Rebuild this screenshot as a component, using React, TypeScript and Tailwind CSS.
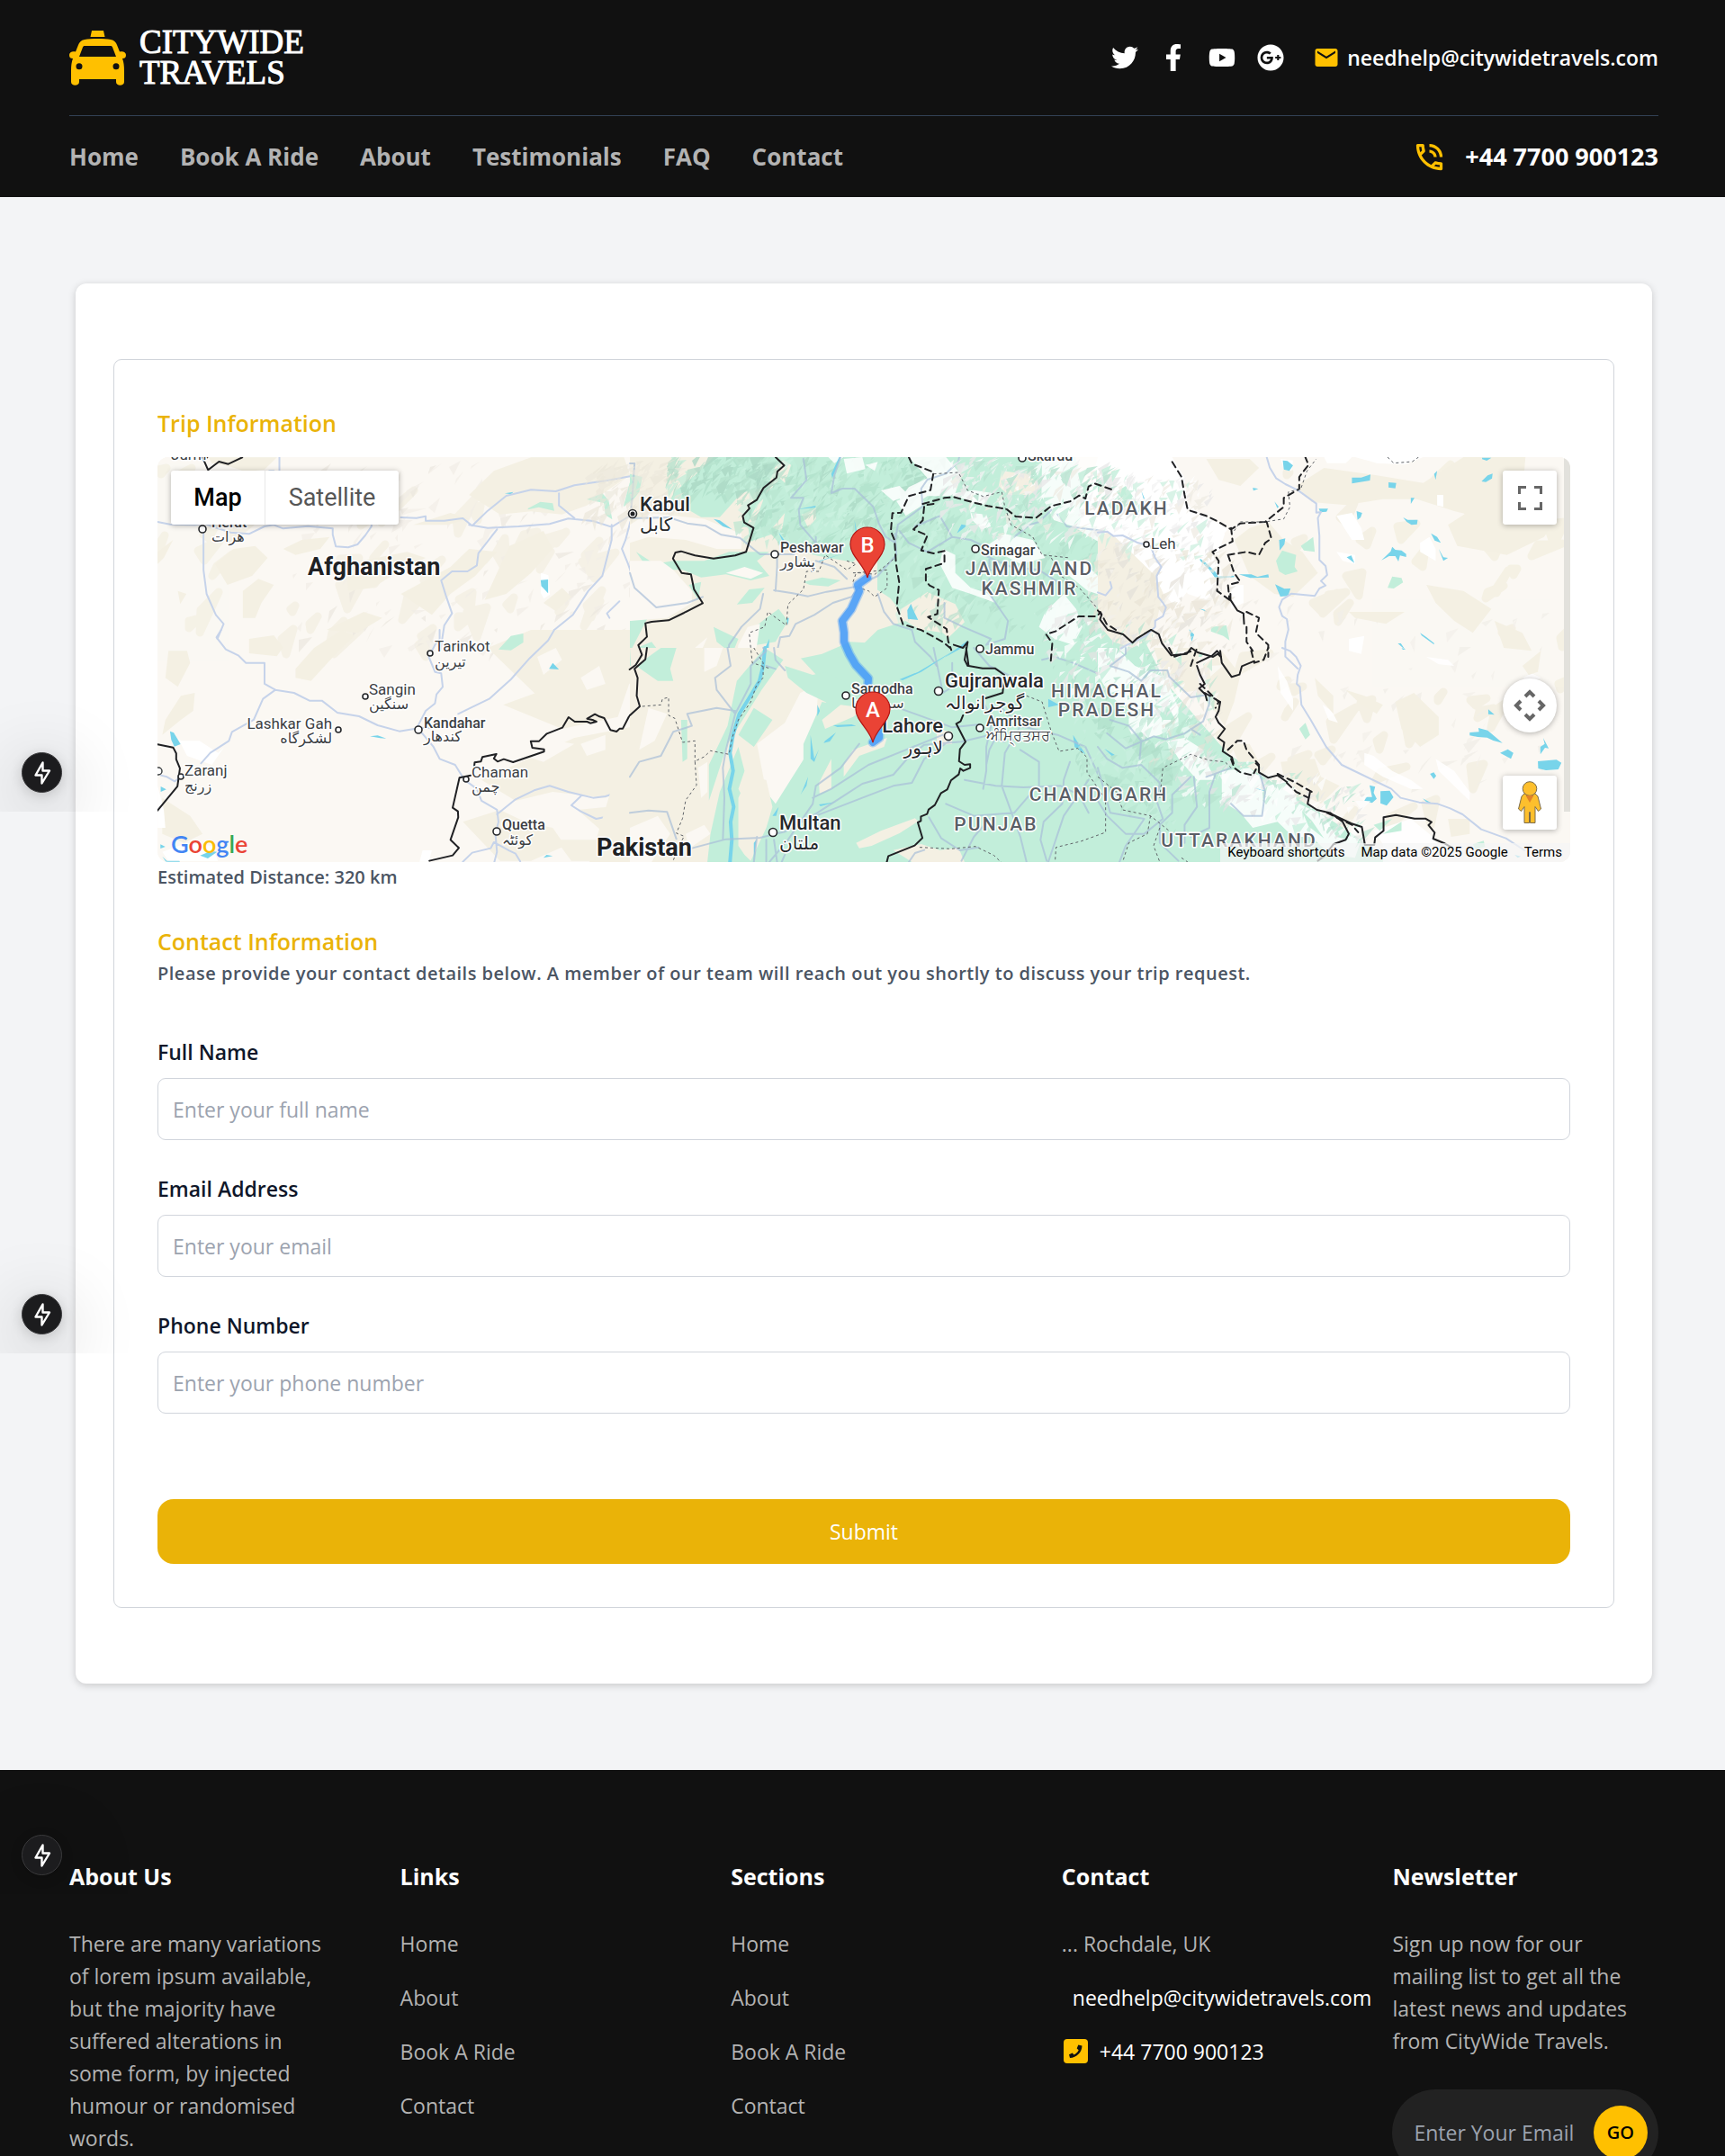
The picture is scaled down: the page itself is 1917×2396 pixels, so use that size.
import React from 'react';
import { FaTwitter, FaFacebookF, FaYoutube, FaGooglePlus } from 'react-icons/fa';
import { MdEmail, MdOutlinePhoneInTalk } from 'react-icons/md';

const CREAM = '#fbf8f3';
const BEIGE = '#f4f0e3';
const GREEN = '#c2eeda';
const RIVER = '#c6d3ea';
const WATER = '#78d4ea';
const INK = '#202124';

/* ---------- terrain ---------- */

function seeded(seed: number) {
  let s = seed;
  return () => {
    s = (s * 16807) % 2147483647;
    return s / 2147483647;
  };
}

/* Small shaded facets scattered over an area to suggest relief; soft ones get rounded, blobby edges. */
function Relief({ seed, n, x, y, w, h, size, colors, slope = 0, opacity = 0.6, soft = 0 }: {
  seed: number; n: number; x: number; y: number; w: number; h: number; size: number; colors: string[]; slope?: number; opacity?: number; soft?: number;
}) {
  const r = seeded(seed);
  const out: Record<string, string> = {};
  for (let i = 0; i < n; i++) {
    const cx = x + r() * w;
    const cy = y + r() * h + ((cx - x) / w) * slope;
    const a = size * (0.4 + r());
    const p = [cx, cy, cx + a * (0.5 + r()), cy - a * r(), cx + a * (r() - 0.4), cy + a * (0.3 + r() * 0.8)].map((v) => v.toFixed(0));
    const c = colors[Math.floor(r() * colors.length)];
    out[c] = (out[c] || '') + `M${p[0]} ${p[1]}L${p[2]} ${p[3]}L${p[4]} ${p[5]}Z`;
  }
  return (
    <g opacity={opacity}>
      {Object.entries(out).map(([c, d]) => <path key={c} d={d} fill={c} stroke={c} strokeWidth={soft} strokeLinejoin="round" />)}
    </g>
  );
}

function Tile({ x, y, children }: { x: number; y: number; children: React.ReactNode }) {
  return <g transform={`translate(${x} ${y}) scale(0.3444 0.3333)`}>{children}</g>;
}

const line = { fill: 'none', strokeLinejoin: 'round' as const, strokeLinecap: 'round' as const, vectorEffect: 'non-scaling-stroke' as const };
const River = ({ d }: { d: string }) => <path d={d} stroke={RIVER} strokeWidth={2} {...line} />;
const Road = ({ d }: { d: string }) => <path d={d} stroke="#a9bfd9" strokeWidth={2} opacity={0.7} {...line} />;
const Border = ({ d }: { d: string }) => <path d={d} stroke={INK} strokeWidth={2} {...line} />;
const Dashed = ({ d }: { d: string }) => <path d={d} stroke={INK} strokeWidth={2} strokeDasharray="7 5" {...line} />;
const Dotted = ({ d }: { d: string }) => <path d={d} stroke="#5f6368" strokeWidth={1} strokeDasharray="3 3" {...line} strokeLinecap="butt" />;

const ROUTE = 'M789 134L778 142L780 149L771 169L761 182L763 195L763 205L769 219L776 231L790 246L789 262L796 280L802 300L802 312L795 317';

function Terrain() {
  return (
    <>
      <rect width="1570" height="450" fill={CREAM} />
      <Relief seed={11} n={46} x={0} y={10} w={480} h={200} size={20} colors={[BEIGE]} opacity={0.8} soft={9} />
      <Relief seed={12} n={170} x={150} y={10} w={400} h={210} size={11} colors={['#f2eee7', '#f3efe8', '#ece8e0']} opacity={0.7} />
      <Relief seed={13} n={46} x={1180} y={10} w={380} h={420} size={18} colors={[BEIGE]} opacity={0.9} soft={9} slope={10} />
      <Relief seed={14} n={70} x={1160} y={160} w={380} h={220} size={10} colors={['#f2efe9', '#f4f1eb']} opacity={0.8} />
      {/* western uplands */}
      <Tile x={-5} y={-68}>
        <g fill={BEIGE}>
          <path d="M180 205h220l-40 40-60 8-60-20-50-8Z M1020 330l80-80 120-45h300l20 60-60 40-80 60-80 30-100-10-100 10Z" />
          <path d="M200 560l60-50 70-10 40 40-50 60-80 30Z M290 650l50-40 50 20-40 60-20 50h-40Z M420 510l60-30 90-10-30 40-80 20Z M430 350l90-50 110 10-30 50-90 30Z M620 560l200-40 60 20-80 40-90 60-80 10Z M800 660l160-90 60-60 90 10-70 80-80 60-60 70Z M1150 500l110-50 30 60-70 80-80 70-70 20Z M15 520l50-40-30 60-20 20Z M80 650l28 10-20 34Z M1260 690l60-50 30 30-50 48Z M560 780l120-60 60 20-80 50Z M840 430l120-40 60 20-70 20Z" />
        </g>
        <g fill={GREEN}>
          <path d="M1210 375l40-22 40 5 5 25-50-12-35 8Z M1400 345l50-20 20 22 12 65-22-15-5-40Z M1568 250l-30 40-20 80 25-20 25-45Z M1555 740l13-8v50l-13-5Z M1155 806l35-12v16h-35Z" />
        </g>
        <path fill="#fff" d="M1252 590l24 8 5 64-20 14-10-20Z" />
        <path fill={WATER} d="M1251 614l24-2v46l-22-24Z M1135 325l28-5-8 8Z" />
        <River d="M15 420l40 8 80 2 30-5 25 10 60 20 60 5 50-25 30-5 30 12 80-8 80 8 0 20 10 40 40 3 30-10 25-30 20-30v-30M800 405l50 2 30-6 0 15 60 0 60-8 30 25 50-50 60-50 80-20 80 5 60-20 100-15 80-15 30-60-20-10M1020 430l60 10 100-5 100-8 60-18 80 8 60 20 60-38 120-14M1310 325l0 40 50 42M1480 430l0 50-30 120-45 50-50 80-60 50-40 50M1110 445l-30 40-30 40-5 40-30 20-50 0-35 30 15 50 20 60-25 40-12 80M163 460v120l10 80 30 70 25 30-20 50M408 205v45M375 250l15 0M1540 420l-15 60-12 30 20 50 20 60 15 20M1505 685l-40 40 8 15" />
        <Border d="M160 205l18 42 35-28 30 8 45-22M175 205l-12-10" />
      </Tile>
      <Tile x={-5} y={192}>
        <g fill={BEIGE}>
          <path d="M50 70l60 0 10 40-40 80-40-30Z M460 130l60-70 90-60 40 20-60 60-80 90-50-10Z M310 30l80-12 30 40-20 30-90-10Z M90 220l45-10-5 60-40 30-60 50 10-50Z M1080 60l140-60h340v150l-60 80-160 20-100-30-80-80Z M1130 250l160-60 250-20-40 120-180 40Z M1060 500l300-140 200-40v180l-100 60-170-20-120 30Z M30 560l90 60 40 60-60 30-70-30Z M1000 640l120-40 80 40 90 20 40 60-110 50h-100Z M1370 600l200-20v120l-100-10Z M1300 700l150 0 100 50v20h-200Z" />
        </g>
        <path fill={CREAM} d="M1240 90l60-30 20 40-60 50Z M1380 160l60-40 20 60-60 20Z M1200 420l100-50 60 10-100 60Z M1380 380l80-30 0 50-60 20Z" />
        <path fill="#fff" d="M15 520l20 80 5 60h-25Z M90 370l60 0 60 40 20-20-40 60-80-30-30-60Z M30 740l80-30 80 10 20 50h-160Z M870 735h30l-10 38h-30Z" />
        <path fill={GREEN} d="M1115 65l40-45 40-8v30l-40 26Z M1555 90l13 0v60l-8-20Z" />
        <g fill={WATER}><path d="M55 338l12 5 22 38-20 8-10-22Z M25 522l18 10-18 8Z M152 752l35-15 20 3-30 22Z M30 755l15 15h40l2 3h-45Z M700 355l25-3 28 10-20-1Z M1278 130l12-20 20 22Z M1260 760l10-10 20 4Z M24 715l16 8-16 6Z" /></g>
        <River d="M220 0l-15 25 30 40 40 20 25 25 60 0 0 70 35 20 60 10 50 26 40 0 50 40 70 12 60 30 70 20 70-12 40 2M395 200l-40 30-30 70-70 40-10 30-60 40-30 35M925 0l0 30-15 20-20 40 20 50 20 5 5 45-20 25-5 30-30 25-25 50M1295 0l-20 35-60 60-60 70-70 65-60 30-40 20M865 340l40 50 20 40 50 20 30 50 40 30 15 40 50 30 5 40-10 40 5 60-15 60M1110 615l60-50 60-30 50-15 60 20 80 20 40-5 60-20 40-60 8-50M1380 555l-30 30 30 20 50 25 40-8 95-15M1000 773l30-30 60-15 10-20 50 28 20 10 15 26M25 485l20 5 25 15 20-15" />
        <Border d="M15 382l50 10 10 20 0 20 12 30-8 60-64 80M1568 105l-15 22 10 25 3 105-30 32-20 40h-10l-10 10-20-5-20-40-15-5-15-8-25 15 20 5 10 5-20 5-10-5-40 0-20-15-20 35-50 20-25 25h-27l5 22 38 5v8l-100 35-30-10-20 8-12-10 8-15-45 10-5 15-20 3-2 20M1025 485l-36 8-22 100 17 12 1 20-25 75 27 27-20 25-75 18" />
      </Tile>

      {/* green Indus basin */}
      <path fill={BEIGE} d="M525 0H1045V212L1000 260H700L650 450H480L525 300Z" />
      <path fill={GREEN} d="M578 0H1020L1060 130L1120 250L1190 330L1330 420L1370 450H610L640 330L690 230L720 170L800 160L800 90L740 40L700 80L640 100L580 90L560 60L570 50Z" />
      <Tile x={525} y={-18}>
        <g fill={BEIGE}>
          <path d="M0 54h270l-60 60-60 50-20 30 100 60 60 0 70-80 70-20-60 90-20 90-30 60-60 10-120-10-20-60-80-40h-20Z" />
          <path d="M480 54l20 30-30 70-60 60-30 60 10 80 60 40 80 30 150 20 100 40 60 40 30 40 90-60 90 40 30 60-90 90 60 60h-520l-60-80-80-40-60-60v-80l30-60-40-60-40-20 0-60 120-10Z" />
        </g>
        <g fill={GREEN}>
          <path d="M480 54h420l-60 200-120 150-110-20-120-30-60-80 0-90 60-60Z" />
          <path d="M0 110l40 10-10 50-30 40Z M20 370l60 40 60-10 100 0 80-30 130 0-40 30 40 50-60 15-80-20-80 10-60-25-100 0-30-30Z M90 460l50 10-30 60-25-10Z M345 545l40-50 50-5-40 50Z M190 480l40-10-10 60Z M270 620l80 40-20 50-50-40Z M0 600l60-15-30 60-30 60Z M0 700l70-30 30 40 30 40h-130Z M380 640l60-50 40-30 30 40-40 70-60 10Z M560 470l60-15 60 10-40 20-60-5Z M480 740l140-30 90-40 180 10 60-50 60 10 60 60 0 60h-560Z M720 750l20-60 60-60 90-30 60 40-60 90Z" />
        </g>
        <g fill={BEIGE}><path d="M1200 100l80 10 50 40-40 30-70 0-30-30Z M555 245l45-20 0 35-25 30Z M500 240l-10 60-30-10Z M490 60l30 20-20 60-20-20Z" /></g>
        <g fill={CREAM}>
          <path d="M0 280l60-40 180 20 120 50 0 50-80 0-100-30-120-10-60 20Z M0 400l100 0 40 30 60 70 0 40-80 50-120 10Z M350 680l30-60 40-10-10 70-20 70h-50Z M210 690l40-35-15 35-30 30Z M310 440l60-20 60 20-40 20Z" />
        </g>
      </Tile>
      <Relief seed={21} n={420} x={640} y={0} w={230} h={95} size={11} colors={['#aedfc9', '#b8e6d0', '#a9d6c3', '#cdf3e2', '#bfead6']} opacity={0.65} />
      <Relief seed={20} n={160} x={565} y={0} w={110} h={48} size={12} colors={['#aedfc9', '#b5e2cd', GREEN, '#a9d6c3']} opacity={0.75} slope={-10} />
      <Relief seed={22} n={240} x={820} y={60} w={220} h={130} size={11} colors={['#b3e2cd', '#bce9d4', '#b0dcc9', '#cff3e3']} />
      <Tile x={525} y={-18}>
        <g fill="#fff" opacity="0.85">
          <path d="M690 60l60-6 10 40-60 15Z M640 54h50l-30 20Z M900 54h120l50 60-20 60 60-10 60 10-30 40-90-30-90 0-30 20-60-10 30-40 60-30Z M860 200l80-30 10 40-60 40Z M810 165l60-15 30 30-50 20Z M1100 240l50 5 15 40-30 10-30-30Z M1010 360l40 20 0 60 50 50 60 20 20 30-80-30-60-20-40-80Z M1330 54h238v300l-60-20-80-50-60-20-40-80Z M1150 350l60-40 90 20 40 60-80 20Z M1400 400l60 0 60 60 48 10v60l-90-30-60-50Z M1340 570l60-60 40 50 20 60-30 60-60-20-50-40Z M760 80l40-10-10 30Z" />
        </g>
        <g fill={WATER}>
          <path d="M540 228l60-12-2 6-56 6Z M1055 308l15-30 18 4Z M895 565l12-22 8 22 15 32-33-4Z M480 305l18 25-5 5Z M725 265l8 40h-5Z M610 400l80-25-80 28Z M436 690l14-30-6 90h-12l-4-28-66-6 60-1Z M505 590l8 0-3 25Z M980 750l25-20 85-65-10 20-70 40Z M270 260l20 5 40 30-30-10Z M650 110l25-56 6 0-20 50-8 20Z" />
        </g>
        <Road d="M0 75l15 0-5 80-8 100M5 258l120-3 60 20 60 8 50 30 60 10 65 55 80 0 30 0M0 440l15 50 70 65 100-15 50-20M600 320l0 20-50-60-5-50 15-40-40 0 50-60-10-70M680 54l-20 60-10 60 35-15 40 0 60 60 20 60 20 40 30 20 10-60 80-60-5-60 20-30 60-20 40-40 10-60M470 500l5-80 0-35M465 498l60 10 50 10 60-15 110-20M745 480l-30 40-60 20-60 40-60 30-20 40-30 5-30 140M800 510l20 60 30 40 60 20 10 40 50 50 20 30M430 510l-10 50-60 60-40 60-5 70M740 480l60-30 60-70-5-70M700 460l-40-40-60-20M920 285l80-35 40 70-80 50-60-30-30-40M1040 320l60 10 60 30 0 70 40 5M1380 245l30 40 158 20M1240 320l50-40 30-10 40-40M1015 540l0 50 60 30 90 40-15 20 60-20 10-60-60-90 0-50M1140 380l90 40 90 10 60 40 0 40" />
      </Tile>
      <Tile x={525} y={212}>
        <g fill={BEIGE}><path d="M0 0h520l90 100 40 60-60 80-60 80-60 90-80 90-40 60-20 154h-290Z" /></g>
        <g fill={CREAM}><path d="M410 320l90-70 50-100 60-30-10 120-20 100-110 180-30-40Z M60 200l60 20-40 90-50 30Z M240 0l60 0-20 60-40 20Z M0 600l90-40 40 60-60 94h-70Z M180 620l60-30 20 30-70 50Z M220 400l30-20 0 100-20 20Z" /></g>
        <g fill={GREEN}><path d="M20 60l80-60h50l-20 70 10 40-50 0Z M345 110l90-110 60 40-70 100-110 180-60 190 0-120 60-130Z M500 60l90 30 40-10 60 30 30 40-70 40-80-40-60-50Z M290 480l60-150 20 80-20 60 30 60-20 100 0 84h-110l10-94Z M165 240l20 0 0 130-15 10Z M400 200l60 40-60 90-50-40Z M560 320l60-140 50 10-20 100-90 130Z" /></g>
        <g fill={BEIGE}>
          <path d="M620 240l60-50 80 10-40 30-90 40Z M690 390l30-50 110-40-10 30-80 30-50 70Z M610 450l40-80 0 100-38 15Z M730 650l80-40 110-42 10 10-60 40-90 42-40 8Z M910 714l-60-40 90-20 60 20 60-8 20 48Z M350 660l0-160 30-70 60 10 20 90-20 70-50 110-20-20Z M990 270l50 10 0 40-50 5Z" />
        </g>
        <path d="M436 0l-6 60-12 50-35 60-30 50-20 70-10 60 10 60-12 60 14 60-10 50 4 60-6 74" stroke={WATER} strokeWidth={4} {...line} />
        <g fill={WATER}><path d="M655 258l60-3 15 5-60 4Z M630 310l35-28-20 30-20 5Z M555 480l20-50-5 30-20 30Z M610 522l55-8-50 14Z M583 290l12 80 15-32-15 42-12-10Z M605 190l8 20-8 18Z M460 560l20-30-8 30Z M1350 170l35 20-35 8Z M1430 290l40 65-35-25Z M870 105l60-25 130-80-120 80-60 28Z M400 650l8-10-8 70Z" /></g>
        <Road d="M315 0l10 60-50 40 5 40 60 80 20-40 30-60 0-60 50-50-10-10M0 430l30-50 70-20 40-80 60-20-15-40 95-20 60 10M340 220l-30 120-10 60 5 100-5 140M0 550l60-8 60 5 30 90M200 668l110-30 110-5 80-20 100-60 90-60 60-40 100-30 50-60 50-40 120-10 80-20 60 20M440 60l30 10M465 0l5 40 30 35M880 205l160 60 90-10M1040 50l0 80-30 20-30-150M740 320l-60 80-80 60-10 60-80 120-60 74M590 500l60-30 120-80 120-50 120-50M600 560l150-60 100-40 60-10 40-80 80-60M1080 440l100 20 90 5 120-5 60 30 30 60M1140 180l30 60-20 90 0 80-10 60M1020 520l90 40 130-10 50-60M965 565l40 70 60 40 60-10M1200 200l60 60 120 30 90 40 40 90M1190 280l-30 60-10 50M1260 260l-50 90-10 110 60 170 20 84M1260 340l60 40 0 80M1420 380l-20 60-5 80-60 60-10 60 20 70M1480 440l-80 120-50 154M1160 570l-50 60-40 80M1110 0l50 60 100 50M1330 40l40-10 60 20 90 40M410 630l-10 84M440 640l0 74M465 640l10 74M500 690l-10 24M900 714l20-30 30-10" />
      </Tile>

      {/* Karakoram, Himalaya */}
      <Tile x={1045} y={-18}>
        <g fill={BEIGE}>
          <path d="M0 320l60-30 90 60 40 70 20 90-20 90-20 60-60 30-60-20-50-60Z M350 60h140l30 30-60 60-70-20Z M640 150l90-60 140 20 180 30 60-40 70-46h200l-10 120-60 60-80 20-80-20-120-40-110 0-120 20-110-10Z M1130 280l90-60 140-10 120 50-40 60-120 60-160-30Z M440 330l50-40 60-20 50 60 60 40 50 70-80 80-60-10-80-60Z M1060 480l120 20 90 60-60 80-60-40-60-60Z M810 570l180 0-60 40-100-20Z M1280 600l90 40 30 60-90-10Z" />
        </g>
        <g fill="#fff">
          <path d="M0 54h240l40 70 10 90 60 40 70 40-50 60-60 30 0 90-60 80-40-50-30-60-60-60-60-60-60-40-60 0Z M240 300l110-40 60 50-20 60 10 90-50 70-60-20-40-90Z M730 54h90l-20 20-60 0Z M770 250l50-10 30 50 10 40-40 0Z M830 54l220 0-60 25-90-5Z M1040 340l30-20 20 40 0 40-50-30Z M590 60l40 5-5 35-25-5Z M1095 180l20 0 0 40-20-5Z M770 370l60 10 0 30-40-10Z M430 480l40 0 0 60-40 20Z M810 660l50-10-10 60-40-10Z" />
        </g>
        <g fill={GREEN}>
          <path d="M655 350l40-30 5 50-35-5Z M575 400l20-35 45 15-5 40 10 15-40 12-20-12Z M935 490l15-38 30 5 5 15-30 20Z M365 620l50-5 10 50-20-15-40-15Z M60 170l30-20 40 60-20 20Z M0 600l25 50-10 30-15-20Z M300 710l40 0-5 10h-35Z M0 130h20v40h-20Z" />
        </g>
        <g fill={WATER}>
          <path d="M597 65l15 2 18 15-12 18-18-5Z M820 122l30 0 30-10-2 20-58 10Z M938 138l25 2-3 18-22-3Z M1085 110l10-10-5 30Z M1240 56l30 0-15 10-15-5Z M1238 135l20-20 16-6-2 16-20 12Z M500 156l18 4-16 6Z M570 202l14 18-5 4Z M713 226l30 0-5 10-20 2Z M835 234l18 6-5 15-10 8Z M1010 190l12 0-12 20Z M985 255l15 8 32 0-2 15-18 2-15-10Z M585 330l20-5-3 20-15 20Z M1075 308l20 12 12 20-20-8Z M1100 360l15 28 15 2-15 10Z M915 398l30-30 5-15 10 10 20 2 15 12v10l-20-5-5 20-10-18-20 0Z M803 388l15-6 10 25Z M330 392l20 15 30 30 10 18-10 4-20-30-30-30Z M390 452l50-3 0 5-50 5Z M455 445l40 0 20 8 35-8 2 10-60 2Z M572 478l30 15 20-1-8 25-25 2Z M1040 640l20 14 25 20v5l-40-30Z M968 675l10 0 14 22Z M295 628l16 18-8 24Z M140 165l12 30-5-3Z M325 558l20 5 8 8Z" />
        </g>
        <River d="M545 54l10 35 20 35 30 20 40 20 60 45 0 30 15-2-10 20 5 60 0 80 20 20 5 30-20 20 15 15-20 10-15 25-75-8-30 20-10 25 10 30 15 10 5 35-10 40 0 50 40 40" />
      </Tile>
      <Tile x={1045} y={212}>
        <path fill={GREEN} d="M0 0h60l60 80-20 60 60 80 120 60 60 60 90 60 70 60 80 40 90 70 60 30 40 114h-770Z" />
        <g fill="#fff" opacity="0.85">
          <path d="M0 0h60l60 60 100 40 40 100 0 60-60 30-80 20-20-40 0-60-60-50-40-70Z M220 310l60-10 60 40 20 60 20 40-60 0-50-60Z M400 410l90-10 60 60 60-20 40 80 80 40 60 60 60 20-20 60-80-10-60-60-60 0-50-50-80 20-40-50-60-40Z M580 60l30 50 20 60 0 40-40-60Z M860 350l30 10 60 50 60 30 40 30-40 0-90-40-60-40Z M1090 370l60 40 50 70 0 30-40-40-60-60Z M725 190l30 20 20 40-30-10Z M1060 30l70 10 20 20-50-5Z M890 610l120-40 60 50 40 50-120 44h-70l0-60Z M1370 100l30-15 30 15-20 10Z" />
        </g>
        <g fill={BEIGE}>
          <path d="M180 0h150l-10 60 10 80-60 10-60-60Z M340 60l60-50 60 80-20 90-30 80-40-60Z M430 320l60 0 30 60-60 20Z M590 380l110-10 20 60 60 30-60 60-60-30-60-60Z M960 180l60-30 80 80 0 60-60 40-60-60Z M800 140l60 20 60 30-20 30-50-30Z M1370 60l60-50-10 70-30 10Z M700 100l60 60 0 60-50-60Z M1130 570l70 0 0 50-60 10Z" />
        </g>
        <g fill="#b5e4cf"><path d="M0 200l60 10-20 60-40 0Z M80 300l60-20 60 60-60 30Z M180 400l60 0 0 60-60-10Z M20 420l60 20-40 60Z" /></g>
        <g fill={GREEN}><path d="M650 270l20-20 15 40-15 15Z M890 590l60-20-40 40Z M1210 655l35-12 5 20-30 10Z M180 190l50 10 20 40-40 0Z M660 545l30 30 40 60-50-40Z M730 560l60 40 20 40-40-10Z M300 220l20 30-20 10Z M450 380l60 0-40 20Z M920 620l60-40 0 30Z" /></g>
        <g fill={WATER}>
          <path d="M1260 205l20 18-20-2Z M1200 282l30-2-2-13 30 8 48 42-30-8-20-10-30-2-26-5Z M1298 350l25-12 18 12-8 20Z M1437 300l18 35-12-2-15 22 0-25 14-10Z M1420 378l60-5 16 10-10 22-40 3-25-6Z M1072 420l12-5 8 12-8 10Z M877 458l18 5-5 20 10 20-15 14-25-8 5-12 20 0Z M912 478l30-2 12 22-22 28-20-8Z M1048 502l28 15-10 2Z M1345 690l20 5-10 5Z M505 467l35 8-5 2Z M980 0l14 6-10 0Z M20 335l35 22-10 3Z" />
        </g>
        <River d="M595 0l25 10 20 20 15 30-10 30-3 30 10 10 5 60 30 50 50 90 50 60 60 30 60 30 40 20 30 30 60 15 60 5 40 15 40 20 60 50 80 30 60 40" />
      </Tile>
      <Relief seed={31} n={420} x={880} y={0} w={290} h={85} size={9} colors={['#ffffff', '#e9e9e9', '#f4f4f4', '#cdf0e0', '#efece4']} slope={30} opacity={0.75} />
      <Relief seed={38} n={130} x={870} y={0} w={200} h={60} size={10} colors={[GREEN, '#b7e3d0', '#e9e9e9']} slope={10} opacity={0.8} />
      <Relief seed={32} n={220} x={1030} y={90} w={160} h={110} size={10} colors={['#e9e4d6', '#f3f1ec', '#efebdf', '#e4e1da']} slope={20} opacity={0.7} />
      <Relief seed={33} n={220} x={985} y={165} w={150} h={95} size={9} colors={['#ffffff', '#ebebeb', '#b7e3d0', '#e4e4e4', GREEN]} slope={30} opacity={0.75} />
      <Relief seed={34} n={170} x={1090} y={230} w={80} h={110} size={9} colors={['#ffffff', '#eeeeee', '#e7e2d8', '#b7e3d0', GREEN]} />
      <Relief seed={35} n={220} x={1130} y={320} w={210} h={60} size={9} colors={['#ffffff', '#e9e9e9', '#b7e3d0', '#e4e4e4', GREEN]} slope={50} opacity={0.7} />
      <Relief seed={36} n={160} x={1020} y={250} w={110} h={120} size={10} colors={['#b7e5d1', '#aedcc8', '#cbf1e1']} slope={50} opacity={0.6} />
      <Relief seed={37} n={110} x={475} y={10} w={100} h={60} size={11} colors={['#eae5d8', '#ece8dd']} slope={-10} />

      {/* waterways and boundaries drawn over the relief */}
      <Tile x={525} y={-18}>
        <Border d="M470 54l28 28-22 20-3 20-42 35-22 40-28 18 5 10-22 25 5 22 30 18-12 40-12 40-35 12-70 10-60-10-45-14-18 4-8 20 28 48 30 5 10 50 28 46-60 32-50 25-55 5-20 5 5 45-28 28 12 32-20 34-20 15" />
        <Border d="M1045 680l30 10 15-20-10 60 10 20" />
        <Dashed d="M900 54l10 22 70 28-10 60-70 20-25 55-28 2-5 60 12 30 5 80 10 60-8 80 20 60 60 20 70 40 25 22M980 210l-30 5-5 50-30 30 45 20-20 50 40 10 35-8 0 40-60 20 0 40 12 15 30 15-5 80-30 10 60 40 5 40 10 30M945 210l70-20 30-3 70 20 40 10 60 10 30 25 65 5 50-40 60-15 30-20 20 10 10-40 20-10 60 22M1568 630l-30-20-20-40-10 15-60 0-45 30-30 20-30 10 20 30-5 60" />
        <Dotted d="M980 110l80-5 30 60 50 20 60-15 10 50 20 60 70 40 30 60 90 10M700 400l30 10-30 20-70-50-20 55-40 0-10 60-50 50-5 70-60-45-10 50-50 20 10 100 60 20M720 470l10-30 100-10 0 60-40 30-20-20-30-10M720 440l30 0 40 5 60-50M1360 390l30 60 60 40 60 70" />
      </Tile>
      <Tile x={525} y={212}>
        <Border d="M55 0l-5 38-35 32 10 30-3 60 10 35-32 30M1085 0l8 60 45 8 40 0 30 22-5 60-55 18M1075 225l-8 20-14 8 30 60-18 25-3 40 18 12 18-2 0 12-22 10-10-8-5 20-25 20-12 30-20 12-20 40-20 15-5 15-20 8 0 15-10 5 15 52-25 25-85 35-10 40" />
        <Dotted d="M400 0l30 50 0 50-20 20-20 60-40 60-20 60-10 55-60-12-20 20-30 15 5 80-35 50-10 60-20 50 25 10-20 40-20 54M40 195l60-5 5-20 20-5 0 60 20 10 25 80 40-5 0 70M935 665l100 5 80-8 60 30 30 30M1280 160l50 20 30 100 25 65 60-10 30 30 0 50 60 90 0 110-80 30-80 20-5 80" />
      </Tile>
      <Tile x={1045} y={-18}>
        <River d="M0 305l30-3 20 15 30-2 50 25 40 10 15 40 20 30-15 30 5 70 15 20 10 15-10 30-25 15 0 20-30 30-60 30-20 12M40 470l5 20-20 25-25-10" />
        <Border d="M0 565l12 15-5 15 25 35 50 15 30 28 15-15 45-28 25 15 10 30 30 40 50-5 15-20 20 15 50 15 15-10 10 10M470 575l-20-10-22-35 0-20M470 575l2 35" />
        <Dashed d="M240 70l30 50 10 60 10 50 60 20 40 20 40 25 30-20 80-5 60-50 0-30 50-30 0-40 30-40-20-50M430 290l5 45-40 20-25 15 20 30-5 100 40 30M420 380l60-10 40 10 20-40 20-15-15-55M420 380l20 60 20 30-40 10 5 50M480 620l0 50 20 30M480 570l40 20-10 50 40 40 0 40" />
        <Dotted d="M440 300l20-30 80 0 60-10 20-40-5-50 40-10 20-60 30-40M935 54l20 20 60-5 20-15" />
      </Tile>
      <Tile x={1045} y={212}>
        <Road d="M90 0l0 20-50 40 60 20 40 30 30-35 55 0 5 20 70 70 60-10 0 30-20 60-60 40-60 20-40-10-90 40-60-50M300 270l30 20M0 330l30 40 50 30 60-10 60 60-10 60 20 60-60 50-60 0-60-60-30-50M40 240l60 20 40 50-5 60M300 430l-60 60 0 60-40 40 0 60 60 60M310 430l10 100-40 60 0 60M380 420l-20 60 0 60 0 60-60 30M430 400l-80 30M0 400l40 150 110 20-60 90-20 54M520 410l20 70-10 80-60 0-40-40" />
        <Border d="M395 10l5 40 32 47 25-8 8-28 40-17M320 60l10 30 15 30-18 15 20 20 5 20M320 50l50-25 15-15 8 10M395 180l-5 30-10 20 10 20 20 20-22 30 20 15-5 30 30 20 5 20M510 385l10 10 0 20 30 18 30-8 30 22M685 480l-8 40 30 20 40 10 30 15 40 20 35 12 10 60h30l3-25 27-22 0-45 40-8 60 12 35 0 20 12-10 10 20 25-5 20 35 15 25 15M750 550l40 30 20 40-10 20-40 15-30 40-20 15" />
        <Dashed d="M230 0l15 30 60-20M300 60l20-60M495 10l10 40 30-10 15-40M330 120l60 60-10 20M345 150l50 30M420 340l30-30 20 0 10 30 40 50M430 370l10 30 20 15 40 10 10-20M580 420l60 30 50 30M610 450l30 30 40 20M740 550l80 40 20 25" />
        <Dotted d="M0 430l60 50 20 60 90 20 60 50M200 500l10-100 90-45 60 20 50 5 20 20M170 560l-10 60-60 30-20 64M200 600l-20 60 20 54M270 700l20 14" />
      </Tile>

      {/* driving route */}
      <path d={ROUTE} fill="none" stroke="#3b92f5" strokeOpacity={0.35} strokeWidth={11} strokeLinejoin="round" strokeLinecap="round" />
      <path d={ROUTE} fill="none" stroke="#4a9df8" strokeOpacity={0.85} strokeWidth={8} strokeLinejoin="round" strokeLinecap="round" />
    </>
  );
}

/* ---------- place names ---------- */

type Place = { x: number; y: number; t: string; local?: string; ly?: number; dot?: [number, number]; kind?: 'small' | 'town' | 'city'; end?: boolean };

const places: Place[] = [
  { x: 15, y: 3, t: 'Jurm', kind: 'small' },
  { x: 60, y: 78, t: 'Herat', local: 'هرات', ly: 94, dot: [50, 80], kind: 'town' },
  { x: 308, y: 216, t: 'Tarinkot', local: 'تیرین', ly: 233, dot: [303, 218], kind: 'small' },
  { x: 235, y: 264, t: 'Sangin', local: 'سنگین', ly: 280, dot: [231, 266], kind: 'small' },
  { x: 194, y: 302, t: 'Lashkar Gah', local: 'لشکرگاه', ly: 318, dot: [201, 303], kind: 'small', end: true },
  { x: 296, y: 301, t: 'Kandahar', local: 'کندهار', ly: 316, dot: [290, 303], kind: 'town' },
  { x: 349, y: 356, t: 'Chaman', local: 'چمن', ly: 372, dot: [343, 358], kind: 'small' },
  { x: 30, y: 354, t: 'Zaranj', local: 'زرنج', ly: 371, dot: [26, 355], kind: 'small' },
  { x: 383, y: 414, t: 'Quetta', local: 'کوئٹہ', ly: 431, dot: [377, 416], kind: 'town' },
  { x: 691, y: 414, t: 'Multan', local: 'ملتان', ly: 436, dot: [684, 417], kind: 'city' },
  { x: 536, y: 60, t: 'Kabul', local: 'کابل', ly: 82, dot: [528, 63], kind: 'city' },
  { x: 692, y: 106, t: 'Peshawar', local: 'پشاور', ly: 122, dot: [686, 108], kind: 'town' },
  { x: 915, y: 109, t: 'Srinagar', dot: [909, 102], kind: 'town' },
  { x: 1104, y: 102, t: 'Leh', dot: [1099, 97], kind: 'small' },
  { x: 967, y: 4, t: 'Skardu', dot: [961, 1], kind: 'town' },
  { x: 920, y: 219, t: 'Jammu', dot: [914, 213], kind: 'town' },
  { x: 771, y: 263, t: 'Sargodha', local: 'سرگودھا', ly: 279, dot: [765, 265], kind: 'town' },
  { x: 875, y: 256, t: 'Gujranwala', local: 'گوجرانوالہ', ly: 280, dot: [868, 260], kind: 'city' },
  { x: 873, y: 306, t: 'Lahore', local: 'لاہور', ly: 330, dot: [879, 310], kind: 'city', end: true },
  { x: 921, y: 299, t: 'Amritsar', local: 'ਅੰਮ੍ਰਿਤਸਰ', ly: 315, dot: [914, 301], kind: 'town' },
];

const regions: [number, number, string][] = [
  [969, 131, 'JAMMU AND'], [969, 153, 'KASHMIR'], [1077, 64, 'LADAKH'], [1055, 267, 'HIMACHAL'], [1055, 288, 'PRADESH'],
  [1046, 382, 'CHANDIGARH'], [932, 415, 'PUNJAB'], [1202, 433, 'UTTARAKHAND'],
];

const halo = { stroke: '#fff', strokeWidth: 3, paintOrder: 'stroke' as const, strokeLinejoin: 'round' as const };
const sizes = { small: 'text-[17px] font-normal', town: 'text-[16px] font-medium', city: 'text-[22px] font-medium' };

function Labels() {
  return (
    <g className="font-['Roboto','DejaVu_Sans',sans-serif]">
      <circle cx="1" cy="349" r="4" fill="#fff" stroke="#3c4043" strokeWidth="1.5" />
      {places.map((p) => {
        const kind = p.kind || 'small';
        return (
          <g key={p.t} fill={kind === 'city' ? '#26282b' : '#3c4043'}>
            {p.dot && <circle cx={p.dot[0]} cy={p.dot[1]} r={kind === 'city' ? 4.5 : kind === 'town' ? 4 : 3} fill="#fff" stroke="#26282b" strokeWidth="1.6" />}
            <text x={p.x} y={p.y} textAnchor={p.end ? 'end' : 'start'} className={sizes[kind]} {...halo}>{p.t}</text>
            {p.local && (
              <text x={p.x} y={p.ly} textAnchor={p.end ? 'end' : 'start'} className={kind === 'city' ? 'text-[20px]' : 'text-[16px]'} {...halo}>{p.local}</text>
            )}
          </g>
        );
      })}
      <circle cx="528" cy="63" r="2.5" fill={INK} />
      {regions.map(([x, y, t]) => (
        <text key={t} x={x} y={y} textAnchor="middle" fill="#5a5e66" className="text-[21px] font-medium tracking-widest" {...halo}>{t}</text>
      ))}
      <text x="167" y="131" fill={INK} className="text-[27px] font-bold" {...halo}>Afghanistan</text>
      <text x="488" y="443" fill={INK} className="text-[27px] font-bold" {...halo}>Pakistan</text>
    </g>
  );
}

function Pin({ x, y, letter }: { x: number; y: number; letter: string }) {
  return (
    <g transform={`translate(${x} ${y})`}>
      <path d="M0 0C-3-14-19-24-19-37a19 19 0 0 1 38 0C19-24 3-14 0 0Z" fill="#ea4335" stroke="#b31412" strokeWidth="1.2" />
      <text y="-28" textAnchor="middle" fill="#fff" className="font-['Roboto',sans-serif] text-[24px] font-medium">{letter}</text>
    </g>
  );
}

function TripMap() {
  const tool = 'absolute right-[15px] flex size-[60px] items-center justify-center bg-white shadow-[0_1px_6px_rgba(0,0,0,0.3)]';
  return (
    <div className="relative h-[450px] overflow-hidden rounded-xl bg-[#fbf8f3] font-['Roboto',sans-serif]">
      <svg viewBox="0 0 1570 450" preserveAspectRatio="xMidYMid slice" className="block h-full w-full" role="img" aria-label="Route map">
        <Terrain />
        <Labels />
        <Pin x={795} y={317} letter="A" />
        <Pin x={789} y={134} letter="B" />
      </svg>
      <div className="absolute top-0 right-0 h-[394px] w-[7px] bg-[#e2e1dc]" />
      <div className="absolute top-[15px] left-[15px] flex h-[60px] rounded-[3px] bg-white text-[27px] shadow-[0_1px_6px_rgba(0,0,0,0.3)]">
        <button type="button" className="w-[105px] border-r border-[#e8e8e8] font-medium text-black">Map</button>
        <button type="button" className="w-[148px] text-[#565656]">Satellite</button>
      </div>
      <button type="button" aria-label="Toggle fullscreen view" className={`${tool} top-[15px] rounded-[3px]`}>
        <svg viewBox="0 0 18 18" className="size-[27px]" fill="#666"><path d="M0 0v6h2V2h4V0H0zm16 0h-4v2h4v4h2V0h-2zm0 16h-4v2h6v-6h-2v4zM2 12H0v6h6v-2H2v-4z" /></svg>
      </button>
      <button type="button" aria-label="Map camera controls" className={`${tool} top-[246px] rounded-full`}>
        <svg viewBox="0 0 36 36" className="size-9" fill="none" stroke="#666" strokeWidth="4"><path d="M13 8l5-5 5 5M13 28l5 5 5-5M8 13l-5 5 5 5M28 13l5 5-5 5" /></svg>
      </button>
      <button type="button" aria-label="Street View" className={`${tool} top-[354px] rounded-[3px]`}>
        <svg viewBox="0 0 26 48" className="h-12 w-[26px]">
          <g fill="#fdbf2d" stroke="#7a6a4a" strokeWidth="1">
            <path d="M7 14h12l3 3 3.500 14-3 2.500-3.500-5v18h-5.500v-12h-1v12H7v-18l-3.500 5-3-2.500L4 17Z" />
            <circle cx="13" cy="8.500" r="7.800" />
          </g>
          <path d="M8.500 16h9L13 24Z" fill="#e0812a" />
        </svg>
      </button>
      <div className="absolute bottom-[5px] left-[15px] font-['Lato',sans-serif] text-[27px] leading-[30px] font-semibold" aria-label="Google">
        <span className="text-[#4285f4]">G</span><span className="text-[#ea4335]">o</span><span className="text-[#fbbc05]">o</span><span className="text-[#4285f4]">g</span><span className="text-[#34a853]">l</span><span className="text-[#ea4335]">e</span>
      </div>
      <div className="absolute right-0 bottom-0 flex h-[21px] items-center gap-[18px] bg-[#f5f5f5]/70 pr-[9px] pl-2 text-[15px] leading-[21px] text-black">
        <button type="button">Keyboard shortcuts</button>
        <span>Map data ©2025 Google</span>
        <a href="#terms">Terms</a>
      </div>
    </div>
  );
}

/* ---------- page ---------- */

function Logo() {
  return (
    <a href="#home" className="flex items-center gap-[15px]">
      <svg viewBox="0 0 63 61" className="h-[61px] w-[63px]">
        <g fill="#ffc000">
          <path d="M25 0h13l1.500 7h-16Z" />
          <path fillRule="evenodd" d="M17 10C24 8.700 39 8.700 46 10c4 .700 6 3 7 6l3 7.500c3-1 7 0 7 3.500 0 3-1.500 4-4 4 1.500 4 2 8 2 14v12c0 5-9 5-9 0v-3H11v3c0 5-9 5-9 0V45c0-6 .500-10 2-14-2.500 0-4-1-4-4 0-3.500 4-4.500 7-3.500l3-7.500c1-3 3-5.300 7-6ZM17 17c-1 0-1.500.500-2 1.500L11 29h41l-4-10.500c-.500-1-1-1.500-2-1.500ZM11 36.200a3.500 3.500 0 1 0 0 7 3.500 3.500 0 0 0 0-7Zm41 0a3.500 3.500 0 1 0 0 7 3.500 3.500 0 0 0 0-7Z" />
        </g>
      </svg>
      <span className="font-['Liberation_Serif',serif] text-[37px] leading-[34px] text-white [-webkit-text-stroke:1px_white]">CITYWIDE<br />TRAVELS</span>
    </a>
  );
}

function Header() {
  return (
    <header className="bg-[#111111] pr-[74px] pl-[77px] text-white">
      <div className="flex h-[129px] items-center justify-between border-b border-[#334155]">
        <Logo />
        <div className="flex items-center text-[30px]">
          <div className="flex gap-6">
            <a href="#twitter" aria-label="Twitter"><FaTwitter /></a>
            <a href="#facebook" aria-label="Facebook"><FaFacebookF /></a>
            <a href="#youtube" aria-label="YouTube"><FaYoutube /></a>
            <a href="#google-plus" aria-label="Google Plus"><FaGooglePlus /></a>
          </div>
          <a href="mailto:needhelp@citywidetravels.com" className="ml-8 flex items-center gap-2">
            <MdEmail className="text-[#ffc000]" />
            <span className="text-[23px] leading-9 font-semibold">needhelp@citywidetravels.com</span>
          </a>
        </div>
      </div>
      <div className="flex h-[90px] items-center justify-between leading-9 font-bold">
        <nav className="flex gap-[46px] text-[26px] text-[#b3b3b3]">
          {['Home', 'Book A Ride', 'About', 'Testimonials', 'FAQ', 'Contact'].map((t) => <a key={t} href="#nav">{t}</a>)}
        </nav>
        <a href="tel:+447700900123" className="flex items-center gap-5 text-[27px]">
          <MdOutlinePhoneInTalk className="size-[39px] text-[#ffc000]" />
          +44 7700 900123
        </a>
      </div>
    </header>
  );
}

function Field({ id, label, type, placeholder }: { id: string; label: string; type: string; placeholder: string }) {
  return (
    <div className="flex flex-col gap-[11px]">
      <label htmlFor={id} className="text-[23px] leading-9 font-semibold text-[#0f172a]">{label}</label>
      <input id={id} type={type} placeholder={placeholder} className="h-[69px] w-full rounded-[9px] border border-gray-300 bg-white px-4 text-[23px] text-gray-900 placeholder:text-[#9ca3af]" />
    </div>
  );
}

function BookingForm() {
  return (
    <main className="bg-gray-100 py-24 pr-[81px] pl-[84px]">
      <div className="rounded-xl bg-white px-[42px] py-[84px] shadow-[0_2px_8px_rgba(0,0,0,0.18)]">
        <form className="rounded-[9px] border border-[#d1d5db] px-12 py-12" onSubmit={(e) => e.preventDefault()}>
          <h2 className="mb-[15px] text-[25px] leading-[45px] font-semibold text-[#eab308]">Trip Information</h2>
          <TripMap />
          <p className="text-[20px] leading-[33px] font-semibold text-[#4b5563]">Estimated Distance: 320 km</p>
          <h2 className="mt-[34px] text-[25px] leading-[42px] font-semibold text-[#eab308]">Contact Information</h2>
          <p className="text-[20px] leading-[30px] font-semibold tracking-wide text-[#4b5563]">Please provide your contact details below. A member of our team will reach out you shortly to discuss your trip request.</p>
          <div className="mt-[54px] flex flex-col gap-9">
            <Field id="name" label="Full Name" type="text" placeholder="Enter your full name" />
            <Field id="email" label="Email Address" type="email" placeholder="Enter your email" />
            <Field id="phone" label="Phone Number" type="tel" placeholder="Enter your phone number" />
          </div>
          <button type="submit" className="mt-[95px] h-[72px] w-full rounded-[18px] bg-[#eab308] text-[23px] text-white">Submit</button>
        </form>
      </div>
    </main>
  );
}

function LinkColumn({ title }: { title: string }) {
  return (
    <div>
      <h3 className="mb-[39px] text-[25px] leading-9 font-bold text-white">{title}</h3>
      <ul className="flex flex-col gap-6">
        {['Home', 'About', 'Book A Ride', 'Contact'].map((t) => <li key={t}><a href="#link">{t}</a></li>)}
      </ul>
    </div>
  );
}

function Footer() {
  const title = 'mb-[39px] text-[25px] leading-9 font-bold text-white';
  return (
    <footer className="grid grid-cols-5 gap-[72px] bg-[#111111] pt-[100px] pr-[74px] pb-24 pl-[77px] text-[23px] leading-9 text-[#b3b3b3]">
      <div>
        <h3 className={title}>About Us</h3>
        <p>There are many variations of lorem ipsum available, but the majority have suffered alterations in some form, by injected humour or randomised words.</p>
      </div>
      <LinkColumn title="Links" />
      <LinkColumn title="Sections" />
      <div>
        <h3 className={title}>Contact</h3>
        <p>... Rochdale, UK</p>
        <a href="mailto:needhelp@citywidetravels.com" className="mt-6 ml-3 block whitespace-nowrap text-white">needhelp@citywidetravels.com</a>
        <a href="tel:+447700900123" className="mt-6 flex items-center gap-3 whitespace-nowrap text-white">
          <svg viewBox="0 0 30 30" className="size-[30px]">
            <rect x="2" y="1" width="27" height="27" rx="4" fill="#ffc000" />
            <path d="M22.500 8.500c-.200 7.300-6 13.200-13.500 13.500l-1-3.800 3.800-1.700 1.700 2c2.400-1.200 4.200-3 5.200-5.300l-2-1.600L18.300 7.500Z" fill="#111111" />
          </svg>
          +44 7700 900123
        </a>
      </div>
      <div>
        <h3 className={title}>Newsletter</h3>
        <p className="pr-4">Sign up now for our mailing list to get all the latest news and updates from CityWide Travels.</p>
        <form className="mt-9 flex h-24 items-center rounded-full bg-[#222222] pr-3 pl-6" onSubmit={(e) => e.preventDefault()}>
          <input type="email" aria-label="Enter Your Email" placeholder="Enter Your Email" className="min-w-0 flex-1 bg-transparent text-white placeholder:text-[#9ca3af]" />
          <button type="submit" className="size-[60px] shrink-0 rounded-full bg-[#ffc000] text-[20px] font-semibold text-black">GO</button>
        </form>
      </div>
    </footer>
  );
}

function QuickAction({ position }: { position: string }) {
  return (
    <div className={`pointer-events-none absolute left-0 flex h-[160px] w-[160px] items-end overflow-hidden pb-[21px] pl-6 ${position}`}>
      <button type="button" aria-label="Quick action" className="pointer-events-auto flex size-[45px] items-center justify-center rounded-full border border-[#3a3a3c] bg-[#1c1c1e] text-white shadow-[0_3px_14px_rgba(0,0,0,0.16),0_18px_80px_10px_rgba(0,0,0,0.18)]">
        <svg viewBox="-12 -14 24 28" className="h-7 w-6" fill="none" stroke="currentColor" strokeWidth="2.400" strokeLinejoin="round"><path d="M.500-11.500L-7.500 2.500h7V11.500L8-2.500H.500Z" /></svg>
      </button>
    </div>
  );
}

export default function App() {
  return (
    <div className="h-screen overflow-y-auto bg-[#111111] font-['Open_Sans','Noto_Sans',sans-serif] [scrollbar-width:none]">
      <div className="relative overflow-hidden">
        <Header />
        <BookingForm />
        <Footer />
        <QuickAction position="top-[742px]" />
        <QuickAction position="top-[1344px]" />
        <QuickAction position="top-[1945px]" />
      </div>
    </div>
  );
}
